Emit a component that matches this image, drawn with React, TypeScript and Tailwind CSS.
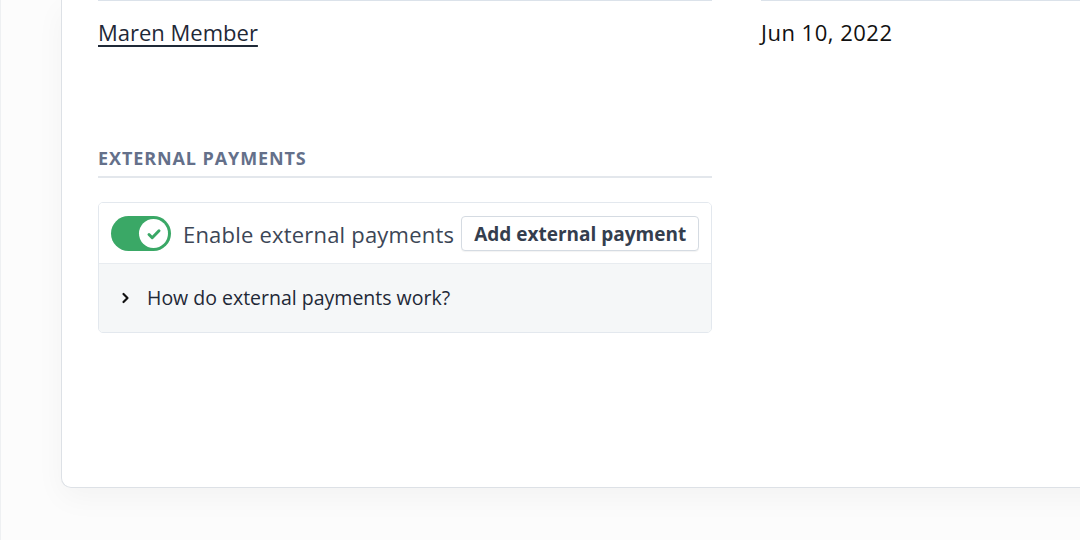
import React from "react";

function Toggle() {
  return (
    <div className="flex h-[35px] w-[60px] shrink-0 items-center justify-end rounded-full bg-[#3aa866] pr-[3px]">
      <div className="flex h-[29px] w-[29px] items-center justify-center rounded-full bg-white">
        <svg width="18" height="18" viewBox="0 0 18 18" fill="none">
          <path
            d="M4 9.5l3.2 3.2L14 5.8"
            stroke="#3aa866"
            strokeWidth="3"
            strokeLinecap="round"
            strokeLinejoin="round"
          />
        </svg>
      </div>
    </div>
  );
}

export default function App() {
  return (
    <div
      className="h-[540px] w-[1080px] overflow-hidden border-l border-[#eef0f2] bg-[#fcfcfc] text-[#1f2937]"
      style={{ fontFamily: '"Open Sans", "Liberation Sans", sans-serif' }}
    >
      <div className="ml-[60px] h-[488px] w-[1100px] rounded-bl-[10px] border-b border-l border-[#dde1e6] bg-white pl-[36px] shadow-[0_10px_30px_rgba(0,0,0,0.04)]">
        <div className="grid grid-cols-[614px_1fr] gap-x-[49px]">
          <div className="border-t border-[#dbe2ea] pt-[17px]">
            <a className="text-[22px] leading-[28px] text-[#1f2937] underline underline-offset-[4px]">
              Maren Member
            </a>
          </div>
          <div className="border-t border-[#dbe2ea] pt-[17px] text-[22px] leading-[28px] tracking-[0.5px] text-[#111111]">
            Jun 10, 2022
          </div>
        </div>

        <div className="mt-[99px] w-[614px]">
          <div className="border-b-2 border-[#e3e7ec] pb-[6px] text-[18px] font-bold leading-[24px] tracking-[0.9px] text-[#64708a]">
            EXTERNAL PAYMENTS
          </div>

          <div className="mt-[24px] overflow-hidden rounded-[5px] border border-[#e3e8ee]">
            <div className="flex items-center gap-[12px] whitespace-nowrap border-b border-[#e8ecf0] bg-white px-[12px] pb-[12px] pt-[13px]">
              <Toggle />
              <span className="shrink-0 text-[22px] leading-[28px] tracking-[0.2px] text-[#3c4656]">
                Enable external payments
              </span>
              <button className="-ml-[5px] h-[35px] shrink-0 rounded-[4px] border border-[#d5dbe2] bg-white px-[12px] text-[19px] font-bold leading-[24px] text-[#343e4e] shadow-[0_1px_1px_rgba(0,0,0,0.05)]">
                Add external payment
              </button>
            </div>
            <div className="flex items-center gap-[16px] bg-[#f5f7f8] px-[22px] pb-[21px] pt-[21px]">
              <svg width="10" height="12" viewBox="0 0 10 12" fill="none">
                <path
                  d="M2.5 2l4 4-4 4"
                  stroke="#111"
                  strokeWidth="2.2"
                  strokeLinecap="round"
                  strokeLinejoin="round"
                />
              </svg>
              <span className="text-[19.5px] leading-[26px] text-[#1f2937]">
                How do external payments work?
              </span>
            </div>
          </div>
        </div>
      </div>
    </div>
  );
}
